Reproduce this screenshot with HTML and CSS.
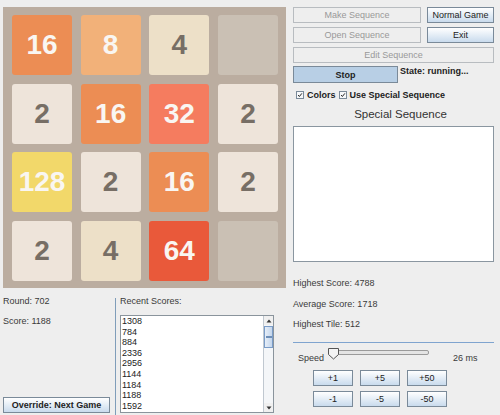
FILE: index.html
```html
<!DOCTYPE html>
<html>
<head>
<meta charset="utf-8">
<link rel="stylesheet" href="styles.css">
</head>
<body>
<div class="app">
  <div class="left">
    <div class="board">
      <div class="tile t16">16</div>
      <div class="tile t8">8</div>
      <div class="tile t4">4</div>
      <div class="tile t0"></div>
      <div class="tile t2">2</div>
      <div class="tile t16">16</div>
      <div class="tile t32">32</div>
      <div class="tile t2">2</div>
      <div class="tile t128">128</div>
      <div class="tile t2">2</div>
      <div class="tile t16">16</div>
      <div class="tile t2">2</div>
      <div class="tile t2">2</div>
      <div class="tile t4">4</div>
      <div class="tile t64">64</div>
      <div class="tile t0"></div>
    </div>
    <div class="lower">
      <div class="stats-col">
        <div class="label">Round: 702</div>
        <div class="label gap">Score: 1188</div>
        <div class="btn bold override">Override: Next Game</div>
      </div>
      <div class="vsep"></div>
      <div class="recent-col">
        <div class="label">Recent Scores:</div>
        <div class="listbox">
          <div class="items">
            <div>1308</div><div>784</div><div>884</div><div>2336</div><div>2956</div><div>1144</div><div>1184</div><div>1188</div><div>1592</div>
          </div>
          <div class="scrollbar">
            <div class="arrow up"><svg width="8" height="8" viewBox="0 0 8 8"><path d="M1.5 5.5 L4 2.5 L6.5 5.5 Z" fill="#333"/></svg></div>
            <div class="thumb"><span class="grip"></span></div>
            <div class="track"></div>
            <div class="arrow down"><svg width="8" height="8" viewBox="0 0 8 8"><path d="M1.5 2.5 L4 5.5 L6.5 2.5 Z" fill="#333"/></svg></div>
          </div>
        </div>
      </div>
    </div>
  </div>
  <div class="right">
    <div class="row r1">
      <div class="btn disabled wide">Make Sequence</div>
      <div class="btn narrow">Normal Game</div>
    </div>
    <div class="row r2">
      <div class="btn disabled wide">Open Sequence</div>
      <div class="btn narrow">Exit</div>
    </div>
    <div class="row r2">
      <div class="btn disabled full">Edit Sequence</div>
    </div>
    <div class="row r4">
      <div class="btn stop bold">Stop</div>
      <div class="state bold">State: running...</div>
    </div>
    <div class="checks">
      <span class="cb"><svg width="8" height="8" viewBox="0 0 8 8"><path d="M1.5 4 L3.2 6 L6.5 1.8" fill="none" stroke="#222" stroke-width="1.3"/></svg></span>
      <span class="bold cbl">Colors</span>
      <span class="cb"><svg width="8" height="8" viewBox="0 0 8 8"><path d="M1.5 4 L3.2 6 L6.5 1.8" fill="none" stroke="#222" stroke-width="1.3"/></svg></span>
      <span class="bold cbl">Use Special Sequence</span>
    </div>
    <div class="title">Special Sequence</div>
    <div class="textarea"></div>
    <div class="label s1">Highest Score: 4788</div>
    <div class="label s2">Average Score: 1718</div>
    <div class="label s2">Highest Tile: 512</div>
    <div class="hsep"></div>
    <div class="speed">
      <div class="label speed-l">Speed</div>
      <div class="slider">
        <div class="strack"></div>
        <svg class="sthumb" width="11" height="12" viewBox="0 0 11 12"><path d="M0.5 0.5 H10.5 V6.5 L5.5 11 L0.5 6.5 Z" fill="#f4f4f4" stroke="#555"/></svg>
      </div>
      <div class="label ms">26 ms</div>
    </div>
    <div class="steps">
      <div class="btn">+1</div>
      <div class="btn">+5</div>
      <div class="btn">+50</div>
      <div class="btn">-1</div>
      <div class="btn">-5</div>
      <div class="btn">-50</div>
    </div>
  </div>
</div>
</body>
</html>
```
FILE: styles.css
```css
body {
  margin: 0;
  background: #eeeeee;
  font-family: "Liberation Sans", Arial, sans-serif;
  font-size: 9px;
  color: #333333;
  width: 500px;
  height: 415px;
  overflow: hidden;
}
.app { display: flex; }
.left { width: 290px; display: flex; flex-direction: column; }
.board {
  margin: 7px 0 0 3px;
  width: 283px;
  height: 281px;
  box-sizing: border-box;
  background: #bbada0;
  padding: 8px 8px 7px 9px;
  display: grid;
  grid-template-columns: repeat(4, 60px);
  grid-template-rows: repeat(4, 60px);
  justify-content: space-between;
  align-content: space-between;
}
.tile {
  border-radius: 3px;
  display: flex;
  align-items: center;
  justify-content: center;
  font-family: "Liberation Sans", Arial, sans-serif;
  font-weight: bold;
  font-size: 28px;
  color: #f9f6f2;
}
.t0 { background: #cac0b4; }
.t2 { background: #eee4da; color: #776e65; }
.t4 { background: #ede0c8; color: #776e65; }
.t8 { background: #f2b179; }
.t16 { background: #ec8d54; }
.t32 { background: #f57c5f; }
.t64 { background: #e9593a; }
.t128 { background: #f2d86a; }

.label { line-height: 11px; height: 11px; white-space: nowrap; color: #3a3a3a; }
.bold { font-weight: bold; }

.lower { display: flex; height: 127px; }
.stats-col {
  width: 112px;
  padding-left: 3px;
  padding-top: 8px;
  display: flex;
  flex-direction: column;
}
.stats-col .gap { margin-top: 9px; }
.override { margin-top: auto; margin-bottom: 2px; width: 107px; }
.vsep { width: 1px; background: #7f9db9; margin-top: 10px; }
.recent-col {
  margin-left: 4px;
  padding-top: 8px;
  display: flex;
  flex-direction: column;
}
.listbox {
  margin-top: 8px;
  width: 154px;
  height: 98px;
  box-sizing: border-box;
  border: 1px solid #8a949c;
  background: #ffffff;
  display: flex;
  overflow: hidden;
}
.items { flex: 1; line-height: 10.6px; padding-left: 1px; color: #222; overflow: hidden; }
.scrollbar {
  width: 9px;
  border-left: 1px solid #c0c8d0;
  background: #f4f6f8;
  display: flex;
  flex-direction: column;
}
.arrow { height: 9px; display: flex; align-items: center; justify-content: center; background: #f0f0f0; }
.thumb {
  height: 22px;
  margin-top: 1px;
  box-sizing: border-box;
  border: 1px solid #7a9cc8;
  background: linear-gradient(90deg, #e6eef8, #c4d6ec);
  display: flex;
  align-items: center;
  justify-content: center;
}
.grip { width: 6px; height: 2px; background: #6e8fb8; }
.track { flex: 1; }

.btn {
  height: 16px;
  box-sizing: border-box;
  border: 1px solid #7a8a99;
  background: linear-gradient(#ffffff, #c9dbed);
  color: #222;
  display: flex;
  align-items: center;
  justify-content: center;
  white-space: nowrap;
}
.btn.disabled { border-color: #b8bcc0; background: #eeeeee; color: #999999; }
.btn.stop { background: #b8cfe5; border-color: #7a8a99; }

.right { width: 201px; margin-left: 3px; display: flex; flex-direction: column; }
.row { display: flex; gap: 6px; }
.r1 { margin-top: 7px; }
.r2 { margin-top: 4px; }
.r4 { margin-top: 3px; }
.wide { width: 128px; }
.narrow { width: 67px; }
.full { width: 201px; }
.stop { width: 105px; height: 17px; }
.state { margin-left: -4px; line-height: 11px; margin-top: 0px; color: #222; }

.checks { display: flex; align-items: center; height: 12px; margin-top: 6px; padding-left: 3px; }
.cb {
  width: 8px;
  height: 8px;
  box-sizing: border-box;
  border: 1px solid #7a8a99;
  background: #f6f8fa;
  display: flex;
  align-items: center;
  justify-content: center;
}
.cb svg { width: 6px; height: 6px; }
.cbl { margin-left: 3px; margin-right: 3px; color: #222; }

.title {
  font-size: 11.5px;
  line-height: 14px;
  height: 14px;
  margin-top: 6px;
  text-align: center;
  padding-left: 14px;
  color: #333;
}
.textarea {
  margin-top: 5px;
  height: 136px;
  box-sizing: border-box;
  border: 1px solid #8a96a0;
  background: #ffffff;
}
.s1 { margin-top: 16px; }
.s2 { margin-top: 9.5px; }
.hsep { height: 1px; background: #7fa4cf; margin-top: 12px; }
.speed { display: flex; height: 16px; margin-top: 5px; align-items: flex-end; }
.speed-l { margin-left: 5px; width: 30px; }
.slider { position: relative; width: 101px; height: 13px; align-self: flex-start; }
.strack {
  position: absolute;
  left: 2px;
  right: 0;
  top: 2px;
  height: 5px;
  box-sizing: border-box;
  border: 1px solid #9a9a9a;
  border-radius: 2px;
  background: #e4e4e4;
}
.sthumb { position: absolute; left: 0; top: 0; }
.ms { margin-left: 24px; }
.steps {
  margin-top: 6px;
  margin-left: 20px;
  display: grid;
  grid-template-columns: repeat(3, 40px);
  column-gap: 7px;
  row-gap: 5px;
}
```
